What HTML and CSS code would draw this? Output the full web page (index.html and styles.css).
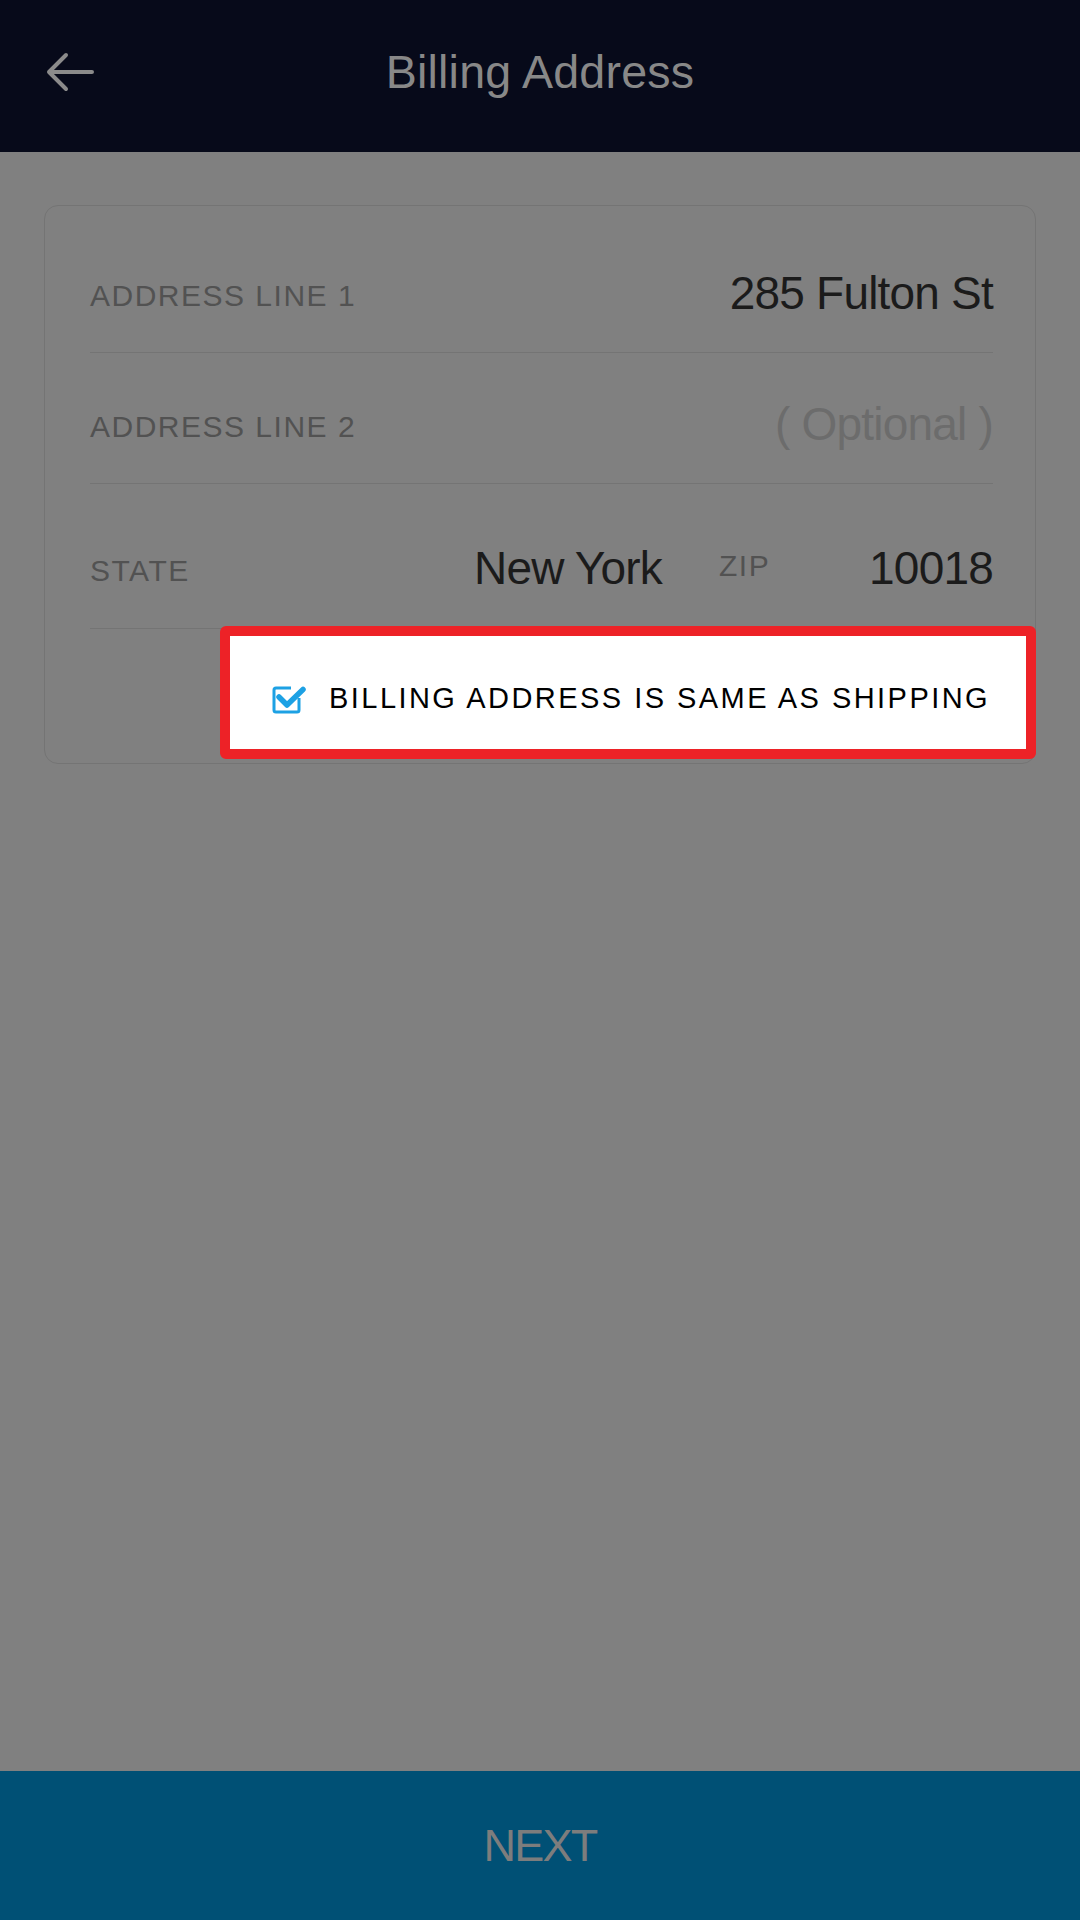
FILE: index.html
```html
<!DOCTYPE html>
<html lang="en">
<head>
<meta charset="utf-8">
<title>Billing Address</title>
<link rel="stylesheet" href="styles.css">
</head>
<body>
<div class="screen">
  <header class="topbar">
    <div class="back">
      <svg class="back-icon" width="54" height="44" viewBox="0 0 54 44" aria-hidden="true">
        <path d="M48 22 H5 M22 5 L5 22 L22 39" fill="none" stroke="#8b8b8b" stroke-width="4" stroke-linecap="round" stroke-linejoin="round"/>
      </svg>
    </div>
    <h1 class="title">Billing Address</h1>
    <div></div>
  </header>

  <main class="content">
    <section class="card">
      <div class="row row-1">
        <span class="label">ADDRESS LINE 1</span>
        <span class="value">285 Fulton St</span>
      </div>
      <div class="row row-2">
        <span class="label">ADDRESS LINE 2</span>
        <span class="value placeholder">( Optional )</span>
      </div>
      <div class="row row-3">
        <div class="group state-group">
          <span class="label">STATE</span>
          <span class="value">New York</span>
        </div>
        <div class="group zip-group">
          <span class="label zip-label">ZIP</span>
          <span class="value">10018</span>
        </div>
      </div>
      <div class="spotlight">
        <svg class="check-icon" width="34" height="30" viewBox="0 0 34 30" aria-hidden="true">
          <path d="M27 14 V26 Q27 28 25 28 H4 Q2 28 2 26 V6 Q2 4 4 4 H19" fill="none" stroke="#1da1e4" stroke-width="3"/>
          <path d="M7 13 L15 21 L31 5.5" fill="none" stroke="#1da1e4" stroke-width="5.5" stroke-linecap="round" stroke-linejoin="round"/>
        </svg>
        <span class="check-text">BILLING ADDRESS IS SAME AS SHIPPING</span>
      </div>
    </section>
  </main>

  <footer class="next-bar">
    <span class="next">NEXT</span>
  </footer>
</div>
</body>
</html>
```

FILE: styles.css
```css
html, body {
  margin: 0;
  padding: 0;
}

body {
  background: #808080;
  font-family: "Liberation Sans", Arial, sans-serif;
}

.screen {
  width: 1080px;
  height: 1920px;
  display: flex;
  flex-direction: column;
  background: #808080;
}

.topbar {
  height: 152px;
  box-sizing: border-box;
  padding-bottom: 8px;
  background: #070a1a;
  display: grid;
  grid-template-columns: 1fr auto 1fr;
  align-items: center;
}

.back {
  padding-left: 44px;
  display: flex;
  align-items: center;
}

.back-icon {
  display: block;
}

.title {
  margin: 0;
  font-weight: normal;
  font-size: 46.6px;
  line-height: 1;
  letter-spacing: 0.2px;
  color: #888888;
}

.content {
  flex: 1;
  padding: 53px 44px 0 44px;
}

.card {
  border: 1px solid #747474;
  border-radius: 14px;
  display: flex;
  flex-direction: column;
}

.row {
  margin: 0 42px 0 45px;
  box-sizing: border-box;
  border-bottom: 1px solid #747474;
  padding-bottom: 36px;
  display: flex;
  align-items: flex-end;
  justify-content: space-between;
}

.row-1 { height: 147px; }
.row-2 { height: 131px; }
.row-3 { height: 145px; padding-bottom: 37px; }

.label {
  font-size: 30px;
  line-height: 1;
  letter-spacing: 1.5px;
  color: #525252;
  margin-bottom: 5px;
}

.value {
  font-size: 46px;
  line-height: 1;
  letter-spacing: -0.8px;
  color: #1b1b1b;
}

.placeholder {
  color: #6c6c6c;
}

.group {
  display: flex;
  align-items: flex-end;
  justify-content: space-between;
}

.state-group {
  flex: 1;
}

.zip-group {
  width: 274px;
  margin-left: 57px;
}

.zip-label {
  margin-bottom: 10px;
}

.spotlight {
  margin: -3px -1px 4px 175px;
  height: 133px;
  box-sizing: border-box;
  border: 10px solid #ed2227;
  border-radius: 6px;
  background: #ffffff;
  padding: 12px 0 0 42px;
  display: flex;
  align-items: center;
  gap: 23px;
}

.check-icon {
  display: block;
  flex: none;
}

.check-text {
  font-size: 29px;
  line-height: 1;
  letter-spacing: 2.45px;
  color: #000000;
  white-space: nowrap;
}

.next-bar {
  height: 149px;
  background: #005075;
  display: flex;
  align-items: center;
  justify-content: center;
}

.next {
  font-size: 45px;
  line-height: 1;
  letter-spacing: -1.8px;
  color: #7d7d7d;
}
```
